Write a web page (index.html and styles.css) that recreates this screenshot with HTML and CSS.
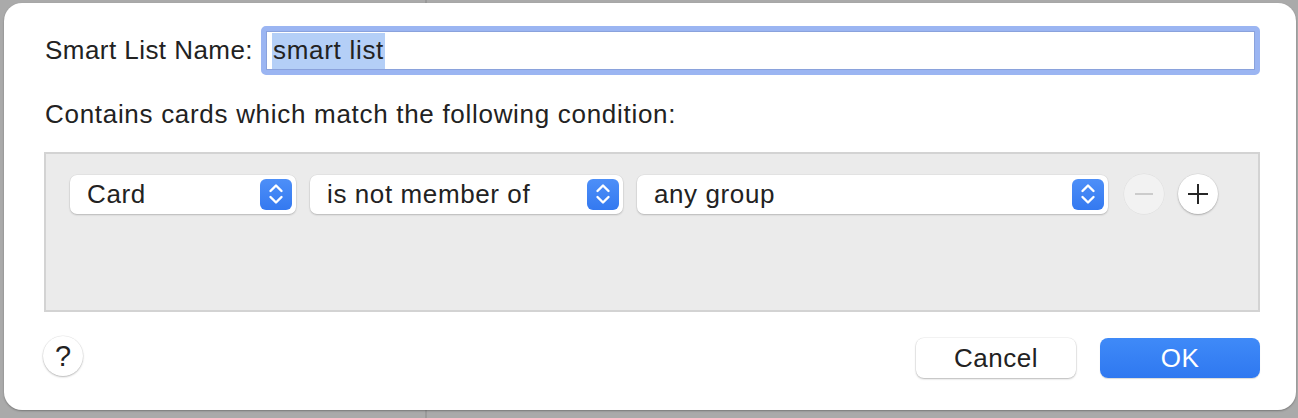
FILE: index.html
```html
<!DOCTYPE html>
<html lang="en">

<head>
    <meta charset="UTF-8" />
    <meta name="viewport" content="width=device-width, initial-scale=1.0" />
    <title>Smart List</title>
    <link rel="stylesheet" href="styles.css">
</head>

<body>
    <!-- Sheet -->
    <div class="sheet">
        <div class="name-row">
            <label for="listName">Smart List Name:</label>
            <div class="name-field">
                <span class="selected">smart list</span>
            </div>
        </div>

        <p class="hint">Contains cards which match the following condition:</p>

        <!-- Condition box -->
        <div class="conditions">
            <div class="rule">
                <div class="popup popup-field">
                    <span>Card</span>
                    <span class="stepper">
                        <svg width="18" height="26" viewBox="0 0 18 26"><path d="M3.5 10 L9 4.5 L14.5 10 M3.5 16 L9 21.5 L14.5 16" fill="none" stroke="#fff" stroke-width="2.4" stroke-linecap="round" stroke-linejoin="round"/></svg>
                    </span>
                </div>
                <div class="popup popup-op">
                    <span>is not member of</span>
                    <span class="stepper">
                        <svg width="18" height="26" viewBox="0 0 18 26"><path d="M3.5 10 L9 4.5 L14.5 10 M3.5 16 L9 21.5 L14.5 16" fill="none" stroke="#fff" stroke-width="2.4" stroke-linecap="round" stroke-linejoin="round"/></svg>
                    </span>
                </div>
                <div class="popup popup-value">
                    <span>any group</span>
                    <span class="stepper">
                        <svg width="18" height="26" viewBox="0 0 18 26"><path d="M3.5 10 L9 4.5 L14.5 10 M3.5 16 L9 21.5 L14.5 16" fill="none" stroke="#fff" stroke-width="2.4" stroke-linecap="round" stroke-linejoin="round"/></svg>
                    </span>
                </div>
                <button class="round disabled" aria-label="Remove">
                    <svg width="22" height="22" viewBox="0 0 22 22"><path d="M2 11 H20" stroke="#cccccc" stroke-width="2"/></svg>
                </button>
                <button class="round" aria-label="Add">
                    <svg width="22" height="22" viewBox="0 0 22 22"><path d="M1 11 H21 M11 1 V21" stroke="#262626" stroke-width="2"/></svg>
                </button>
            </div>
        </div>

        <!-- Footer -->
        <div class="footer">
            <button class="round help">?</button>
            <div class="actions">
                <button class="btn">Cancel</button>
                <button class="btn primary">OK</button>
            </div>
        </div>
    </div>
</body>

</html>
```

FILE: styles.css
```css
* {
    box-sizing: border-box;
}

body {
    margin: 0;
    padding: 3px 2px 0 4px;
    height: 418px;
    overflow: hidden;
    font-family: 'Liberation Sans', Arial, sans-serif;
    color: #222222;
    background: linear-gradient(to right, #aaaaaa 425px, #9a9a9a 425px, #9a9a9a 427px, #aaaaaa 427px);
}

.sheet {
    height: 407px;
    background-color: #ffffff;
    border-radius: 18px;
    padding: 23px 36px 0 41px;
    box-shadow: 0 1px 2px rgba(0, 0, 0, 0.3);
    display: flex;
    flex-direction: column;
}

.name-row {
    display: flex;
    align-items: center;
    font-size: 26px;
}

.name-row label {
    margin-right: 8px;
    letter-spacing: 0.45px;
}

.name-field {
    flex-grow: 1;
    height: 49px;
    border: 5px solid #9bb5f2;
    border-radius: 5px;
    padding: 1px 6px;
    display: flex;
    align-items: center;
    box-shadow: inset 0 0 0 1px #8aa2dc;
}

.selected {
    background-color: #b4cff7;
    padding: 2px 1px 3px;
    letter-spacing: 0.7px;
}

.hint {
    margin: 24px 0 0 0;
    font-size: 26px;
    letter-spacing: 0.7px;
    line-height: 30px;
}

.conditions {
    margin: 23px 0 0 -1px;
    height: 160px;
    background-color: #ebebeb;
    border: 2px solid #d3d3d3;
    padding: 20px 24px;
}

.rule {
    display: flex;
    align-items: center;
    gap: 14px;
}

.popup {
    height: 39px;
    background-color: #ffffff;
    border-radius: 7px;
    box-shadow: 0 1px 2px rgba(0, 0, 0, 0.2), 0 0 0 0.5px rgba(0, 0, 0, 0.06);
    display: flex;
    align-items: center;
    justify-content: space-between;
    padding: 0 4px 0 17px;
    font-size: 26px;
    letter-spacing: 0.6px;
}

.popup-field {
    width: 226px;
}

.popup-op {
    width: 313px;
}

.popup-value {
    width: 471px;
}

.stepper {
    width: 32px;
    height: 31px;
    border-radius: 6px;
    background: linear-gradient(#4d8ff8, #3479f0);
    display: flex;
    align-items: center;
    justify-content: center;
}

.round {
    width: 40px;
    height: 40px;
    border-radius: 50%;
    border: none;
    padding: 0;
    background-color: #ffffff;
    box-shadow: 0 1px 2px rgba(0, 0, 0, 0.25), 0 0 0 0.5px rgba(0, 0, 0, 0.08);
    display: flex;
    align-items: center;
    justify-content: center;
}

.round.disabled {
    margin-left: 2px;
    background-color: #f2f2f2;
    box-shadow: 0 0 0 0.5px rgba(0, 0, 0, 0.06);
}

.footer {
    margin-top: 22px;
    display: flex;
    justify-content: space-between;
    align-items: center;
}

.help {
    font-family: 'Liberation Sans', Arial, sans-serif;
    font-size: 29px;
    color: #222222;
    margin-left: -2px;
}

.actions {
    display: flex;
    gap: 24px;
    margin-top: 4px;
}

.btn {
    width: 160px;
    height: 40px;
    border: none;
    border-radius: 8px;
    background-color: #ffffff;
    box-shadow: 0 1px 2px rgba(0, 0, 0, 0.25), 0 0 0 0.5px rgba(0, 0, 0, 0.08);
    font-family: 'Liberation Sans', Arial, sans-serif;
    font-size: 26px;
    color: #222222;
    letter-spacing: 0.5px;
}

.btn.primary {
    background: linear-gradient(#3f8af8, #2f78f0);
    color: #ffffff;
    box-shadow: 0 1px 1px rgba(0, 0, 0, 0.15);
}
```
